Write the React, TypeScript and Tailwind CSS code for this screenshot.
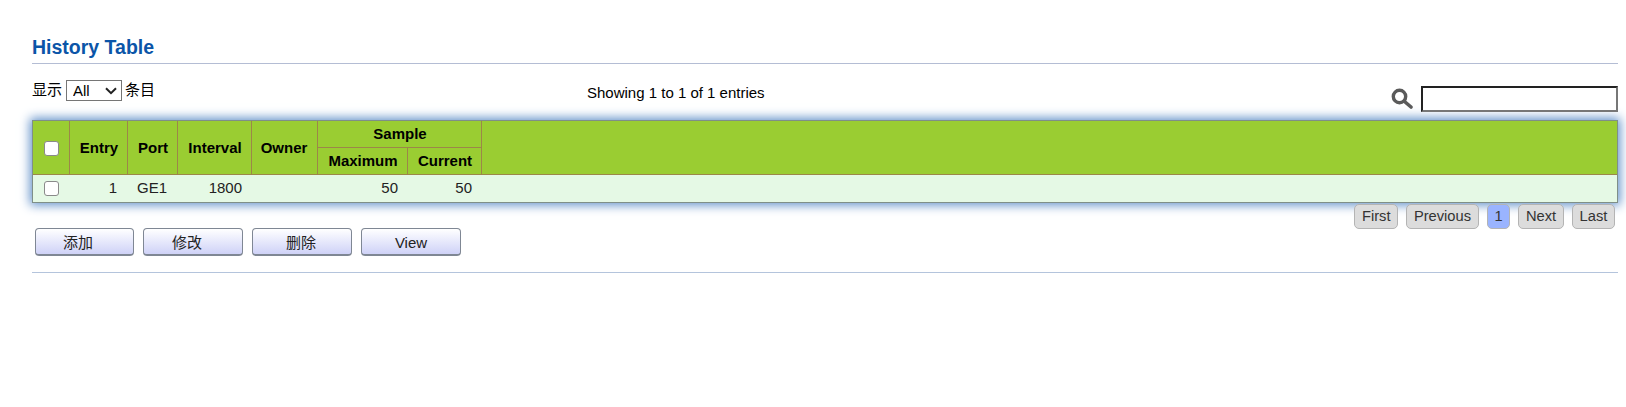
const font = { fontFamily: '"Liberation Sans", "Noto Sans CJK SC", Arial, sans-serif' };

const thBase = "border border-[#9c8748] text-center font-bold text-black";

function PageButton({ label, active = false }: { label: string; active?: boolean }) {
  return (
    <span
      className={`h-[25px] rounded-[5px] border border-[#b4b4b4] px-[6.7px] text-[14.7px] leading-[23px] text-[#333] ${
        active ? "bg-[#9ab4ff]" : "bg-[#dcdcdc]"
      }`}
    >
      {label}
    </span>
  );
}

function ActionButton({ label, className = "w-[100px]" }: { label: string; className?: string }) {
  return (
    <button
      type="button"
      className={`h-[28px] rounded-[4px] border border-b-2 border-[#7f8794] bg-gradient-to-b from-white to-[#cfd2f7] pt-[2px] leading-[22px] text-[#222] ${className}`}
    >
      {label}
    </button>
  );
}

export default function App() {
  return (
    <div style={font} className="h-[407px] w-[1626px] bg-white pt-[35px] pr-[8px] pl-[32px] text-[15px] text-black">
      <h1 className="h-[29px] border-b border-[#b4bdd4] text-[19.5px] leading-[24px] font-bold text-[#0b55a8]">
        History Table
      </h1>

      <div className="flex h-[56px] items-start pt-[16px]">
        <label className="flex h-[21px] w-[555px] items-center">
          显示
          <span className="relative mr-[3px] ml-[4px] block h-[21px] w-[56px]">
            <select className="h-full w-full appearance-none rounded-none border border-[#767676] bg-white pl-[6px] text-[15px] leading-[19px]">
              <option>All</option>
            </select>
            <svg width="12" height="8" viewBox="0 0 12 8" fill="none" className="pointer-events-none absolute top-[7px] right-[5px]">
              <path d="M1 1.2 L6 6.2 L11 1.2" stroke="#222" strokeWidth="2" />
            </svg>
          </span>
          条目
        </label>
        <div className="mt-[2px] h-[22px] leading-[22px]">Showing 1 to 1 of 1 entries</div>
        <div className="ml-auto flex items-center gap-[8px] pt-[6px]">
          <svg width="22" height="22" viewBox="0 0 22 22" fill="none">
            <circle cx="8.5" cy="8.5" r="6.2" stroke="#5a5a5a" strokeWidth="3.4" />
            <path d="M13.5 13.5 L20 19" stroke="#5a5a5a" strokeWidth="3.6" strokeLinecap="round" />
          </svg>
          <input className="h-[26px] w-[197px] border-2 border-t-[#222] border-r-[#777] border-b-[#777] border-l-[#222] bg-white outline-none" />
        </div>
      </div>

      <div className="h-[83px] border border-[#7f8f88] shadow-[0_0_10px_2px_#5f8fc8]">
        <table className="h-full w-full border-collapse">
          <thead>
            <tr className="h-[26px] bg-[#9acd32]">
              <th rowSpan={2} className={`${thBase} w-[36px] border-t-0 border-l-0 pt-[2px] pl-[1px]`}>
                <input type="checkbox" className="mx-auto block size-[15px] appearance-none rounded-[3px] border border-[#8a8a8a] bg-white" />
              </th>
              <th rowSpan={2} className={`${thBase} w-[58px] border-t-0 pt-[2px] pr-[8px] pl-[10px]`}>Entry</th>
              <th rowSpan={2} className={`${thBase} w-[50px] border-t-0 pt-[2px] pr-[8px] pl-[10px]`}>Port</th>
              <th rowSpan={2} className={`${thBase} w-[74px] border-t-0 pt-[2px] pr-[8px] pl-[10px]`}>Interval</th>
              <th rowSpan={2} className={`${thBase} w-[66px] border-t-0 pt-[2px] px-[9px]`}>Owner</th>
              <th colSpan={2} className={`${thBase} border-t-0 pt-[1px] pr-[8px] pl-[10px]`}>Sample</th>
              <th rowSpan={2} className={`${thBase} border-t-0 border-r-0`}></th>
            </tr>
            <tr className="h-[27px] bg-[#9acd32]">
              <th className={`${thBase} w-[90px] pt-[2px] pr-[8px] pl-[10px]`}>Maximum</th>
              <th className={`${thBase} w-[74px] pt-[2px] pr-[8px] pl-[10px]`}>Current</th>
            </tr>
          </thead>
          <tbody>
            <tr className="bg-[#e5f9e5] text-[#222]">
              <td className="px-0">
                <input type="checkbox" className="mx-auto block size-[15px] appearance-none rounded-[3px] border border-[#8a8a8a] bg-white" />
              </td>
              <td className="pr-[10px] pl-[8px] text-right">1</td>
              <td className="pr-[8px] pl-[10px] text-left">GE1</td>
              <td className="px-[9px] text-right">1800</td>
              <td className="px-[9px]"></td>
              <td className="px-[9px] text-right">50</td>
              <td className="px-[9px] text-right">50</td>
              <td></td>
            </tr>
          </tbody>
        </table>
      </div>

      <div className="flex items-start justify-between pt-[1px]">
        <div className="flex gap-[9px] pt-[24px] pl-[3px]">
          <ActionButton label="添加" className="w-[99px] pr-[13px]" />
          <ActionButton label="修改" className="w-[100px] pr-[12px]" />
          <ActionButton label="删除" className="w-[100px] pr-[2px]" />
          <ActionButton label="View" />
        </div>
        <div className="flex gap-[8px] pr-[3px]">
          <PageButton label="First" />
          <PageButton label="Previous" />
          <PageButton label="1" active />
          <PageButton label="Next" />
          <PageButton label="Last" />
        </div>
      </div>

      <div className="mt-[16px] h-px bg-[#b4c4dc]" />
    </div>
  );
}
